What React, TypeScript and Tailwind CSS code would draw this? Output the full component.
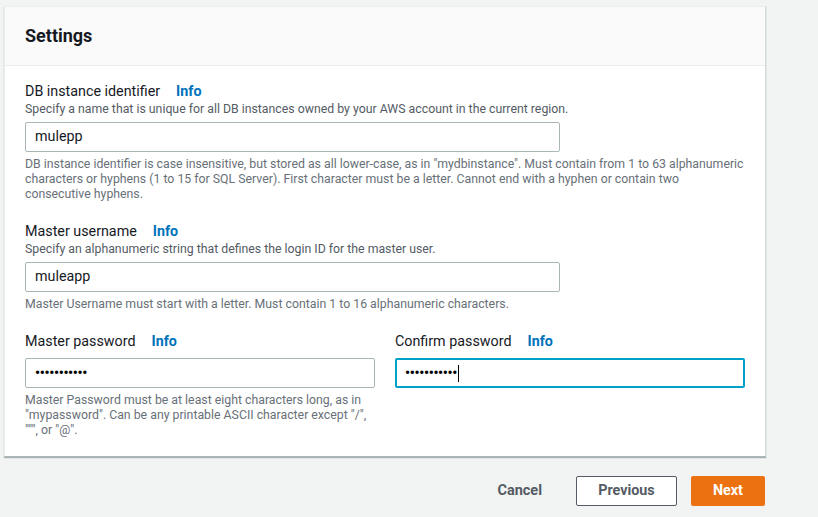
import React from "react";

const font = { fontFamily: "Roboto, 'Noto Sans', sans-serif" };

function Label({ text }: { text: string }) {
  return (
    <div className="flex items-center gap-[16px] text-[14.3px] leading-[20px] text-[#16191f]">
      <span>{text}</span>
      <span className="font-bold text-[#0073bb]">Info</span>
    </div>
  );
}

function Input({ value, focused, password }: { value: string; focused?: boolean; password?: boolean }) {
  return (
    <div
      className={
        "flex h-[30px] items-center rounded-[2px] bg-white text-[14.3px] text-[#16191f] " +
        (focused ? "border-2 border-[#00a1c9] px-[8px]" : "border border-[#aab7b8] px-[9px]")
      }
    >
      {password ? (
        <span className="flex items-center text-[14px] font-bold tracking-[-0.3px] text-black">
          {value}
          {focused && <span className="ml-[1px] inline-block h-[17px] w-px bg-black" />}
        </span>
      ) : (
        <span>{value}</span>
      )}
    </div>
  );
}

export default function App() {
  return (
    <div style={font} className="min-h-[517px] w-[818px] bg-[#f2f3f3] pt-[6px]">
      <div className="ml-[4px] w-[762px] border border-[#eaeded] border-b-[#aab7b8] border-r-[#d5dbdb] bg-white shadow-[0_1px_1px_rgba(0,28,36,0.3)]">
        <div className="flex h-[59px] items-center border-b border-[#eaeded] bg-[#fafafa] px-[20px] pb-[2px]">
          <h2 className="text-[18px] font-bold text-[#16191f]">Settings</h2>
        </div>
        <div className="flex flex-col px-[20px] pt-[15px] pb-[18px]">
          <Label text="DB instance identifier" />
          <div className="text-[12.3px] leading-[16px] text-[#545b64]">
            Specify a name that is unique for all DB instances owned by your AWS account in the current region.
          </div>
          <div className="mt-[5px] w-[535px]">
            <Input value="mulepp" />
          </div>
          <div className="mt-[5px] text-[12.3px] leading-[15px] text-[#687078]">
            DB instance identifier is case insensitive, but stored as all lower-case, as in "mydbinstance". Must contain
            from 1 to 63 alphanumeric
            <br />
            characters or hyphens (1 to 15 for SQL Server). First character must be a letter. Cannot end with a hyphen or
            contain two
            <br />
            consecutive hyphens.
          </div>

          <div className="mt-[19px]">
            <Label text="Master username" />
          </div>
          <div className="text-[12.3px] leading-[16px] text-[#545b64]">
            Specify an alphanumeric string that defines the login ID for the master user.
          </div>
          <div className="mt-[5px] w-[535px]">
            <Input value="muleapp" />
          </div>
          <div className="mt-[5px] text-[12.3px] leading-[15px] text-[#687078]">
            Master Username must start with a letter. Must contain 1 to 16 alphanumeric characters.
          </div>

          <div className="mt-[19px] grid grid-cols-2 gap-x-[20px]">
            <div className="flex flex-col">
              <Label text="Master password" />
              <div className="mt-[7px]">
                <Input value="•••••••••••" password />
              </div>
              <div className="mt-[5px] text-[12.3px] leading-[15px] text-[#687078]">
                Master Password must be at least eight characters long, as in
                <br />
                "mypassword". Can be any printable ASCII character except "/",
                <br />
                """, or "@".
              </div>
            </div>
            <div className="flex flex-col">
              <Label text="Confirm password" />
              <div className="mt-[7px]">
                <Input value="•••••••••••" password focused />
              </div>
            </div>
          </div>
        </div>
      </div>
      <div className="mt-[19px] flex w-[765px] items-center justify-end gap-[14px]">
        <button className="mr-[10px] h-[30px] px-[10px] text-[14.5px] font-bold text-[#545b64]">Cancel</button>
        <button className="h-[30px] w-[101px] rounded-[2px] border border-[#545b64] bg-white text-[14.3px] font-bold text-[#545b64]">
          Previous
        </button>
        <button className="h-[30px] w-[74px] rounded-[2px] bg-[#ec7211] text-[14.3px] font-bold text-white">Next</button>
      </div>
    </div>
  );
}
